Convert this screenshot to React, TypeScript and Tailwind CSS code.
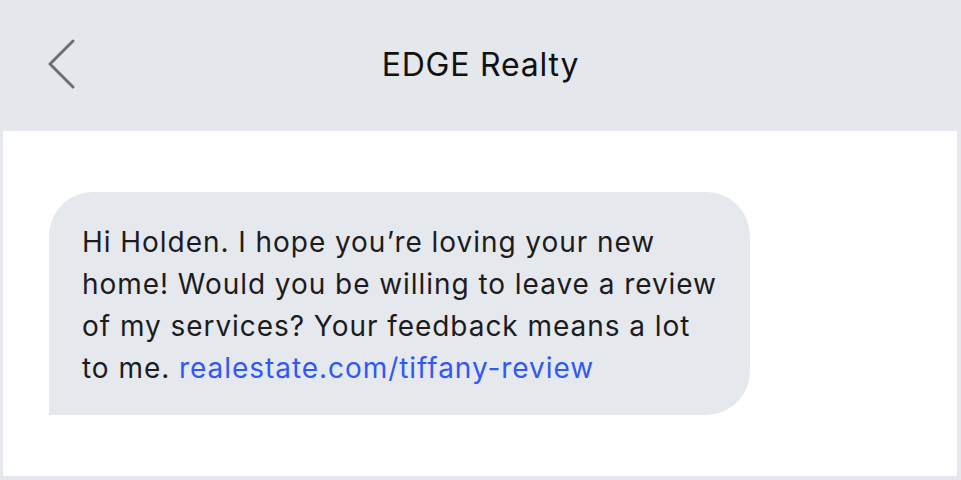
const font = { fontFamily: "Inter, 'Noto Sans', sans-serif" };

const BackChevron = () => (
  <svg width="32" height="52" viewBox="0 0 32 52" fill="none" className="block">
    <path
      d="M25 3 L2 26 L25 49"
      stroke="#6b6f76"
      strokeWidth="3"
      strokeLinecap="round"
      strokeLinejoin="round"
    />
  </svg>
);

const MessageBubble = () => {
  return (
    <div className="w-[701px] h-[223px] bg-[#e5e8ec] rounded-[44px] rounded-bl-none pl-[33px] pt-[29px]">
      <p className="text-[28px] leading-[42px] text-[#1c1c1e] whitespace-nowrap tracking-[0.95px]">
        Hi Holden. I hope you’re loving your new
        <br />
        home! Would you be willing to leave a review
        <br />
        of my services? Your feedback means a lot
        <br />
        to me. <span className="text-[#3158f5]">realestate.com/tiffany-review</span>
      </p>
    </div>
  );
};

export default function App() {
  return (
    <div className="w-[961px] h-[480px] bg-[#e4e7eb] flex flex-col" style={font}>
      <header className="h-[131px] relative flex items-center justify-center shrink-0">
        <div className="absolute left-[48px] top-[38px]">
          <BackChevron />
        </div>
        <h1 className="text-[32px] text-[#111111] -mt-[2px] tracking-[0.8px]">EDGE Realty</h1>
      </header>
      <main className="flex-1 bg-white ml-[3px] mr-[4px] mb-[4px] pl-[46px] pt-[61px]">
        <MessageBubble />
      </main>
    </div>
  );
}
